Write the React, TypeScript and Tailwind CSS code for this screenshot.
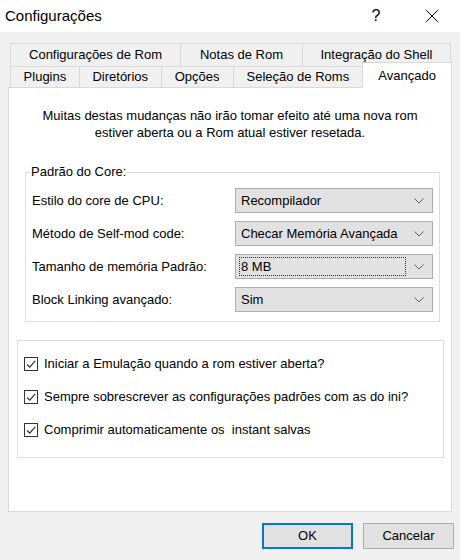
import React from "react";

const font = { fontFamily: '"Liberation Sans", Arial, sans-serif' };

function Tab({ label, w, selected }: { label: string; w: string; selected?: boolean }) {
  return (
    <div
      className={
        selected
          ? `${w} h-[26px] -mt-[4px] -ml-[1px] bg-white border border-b-0 border-[#d9d9d9] flex items-start justify-center pt-[3px] text-[13px] text-black relative z-10`
          : `${w} h-full bg-[#f0f0f0] border border-[#d9d9d9] -ml-[1px] flex items-center justify-center text-[13px] text-black`
      }
    >
      {label}
    </div>
  );
}

function Chevron() {
  return (
    <svg width="10" height="6" viewBox="0 0 10 6" className="shrink-0">
      <path d="M0.5 0.5 L5 5 L9.5 0.5" fill="none" stroke="#606060" strokeWidth="1" />
    </svg>
  );
}

function Select({ value, focused }: { value: string; focused?: boolean }) {
  return (
    <div className="w-[198px] h-[25px] bg-[#e1e1e1] border border-[#adadad] flex items-center pl-[3px] pr-[8px]">
      <div
        className={
          focused
            ? "flex-1 h-[19px] border border-dotted border-[#333] flex items-center pl-[1px] text-[13px] text-black mr-[8px]"
            : "flex-1 flex items-center pl-[2px] text-[13px] text-black"
        }
      >
        {value}
      </div>
      <Chevron />
    </div>
  );
}

function Row({ label, value, focused }: { label: string; value: string; focused?: boolean }) {
  return (
    <div className="flex items-center h-[25px]">
      <div className="w-[209px] pl-[6px] text-[13px] text-black">{label}</div>
      <Select value={value} focused={focused} />
    </div>
  );
}

function Check({ label }: { label: string }) {
  return (
    <div className="flex items-center gap-[6px] h-[14px]">
      <div className="w-[14px] h-[14px] border border-[#333] bg-white flex items-center justify-center">
        <svg width="12" height="12" viewBox="0 0 12 12">
          <path d="M2 6.5 L4.8 9.2 L10.2 2.8" fill="none" stroke="#333" strokeWidth="1.2" />
        </svg>
      </div>
      <span className="text-[13px] text-black whitespace-pre">{label}</span>
    </div>
  );
}

export default function App() {
  return (
    <div className="w-[460px] h-[560px] bg-[#f0f0f0] flex flex-col overflow-hidden" style={font}>
      {/* Title bar */}
      <div className="h-[32px] bg-white flex items-center shrink-0">
        <span className="pl-[5px] text-[15px] text-black flex-1">Configurações</span>
        <span className="w-[30px] text-center text-[16px] text-black mr-[34px]">?</span>
        <svg width="14" height="14" viewBox="0 0 14 14" className="mr-[21px]">
          <path d="M1 1 L13 13 M13 1 L1 13" stroke="#111" strokeWidth="1" />
        </svg>
      </div>

      {/* Body */}
      <div className="flex flex-col pt-[11px] px-[8px]">
        {/* Tabs */}
        <div className="flex h-[24px] pl-[3px]">
          <Tab label="Configurações de Rom" w="w-[171px]" />
          <Tab label="Notas de Rom" w="w-[123px]" />
          <Tab label="Integração do Shell" w="w-[149px]" />
        </div>
        <div className="flex h-[22px] pl-[3px] -mt-[1px] items-start">
          <Tab label="Plugins" w="w-[70px]" />
          <Tab label="Diretórios" w="w-[83px]" />
          <Tab label="Opções" w="w-[73px]" />
          <Tab label="Seleção de Roms" w="w-[131px]" />
          <Tab label="Avançado" w="w-[90px]" selected />
        </div>

        {/* Panel */}
        <div className="h-[425px] -mt-[1px] bg-white border border-[#d9d9d9] flex flex-col px-[8px]">
          <p className="mt-[19px] text-center text-[13px] leading-[17px] text-black">
            Muitas destas mudanças não irão tomar efeito até uma nova rom
            <br />
            estiver aberta ou a Rom atual estiver resetada.
          </p>

          <div className="mt-[31px] ml-[8px] w-[415px] h-[150px] border border-[#dcdcdc] relative flex flex-col gap-[8px] pt-[15px]">
            <span className="absolute -top-[9px] left-[4px] bg-white px-[1px] text-[13px] leading-[16px] text-black">
              Padrão do Core:
            </span>
            <Row label="Estilo do core de CPU:" value="Recompilador" />
            <Row label="Método de Self-mod code:" value="Checar Memória Avançada" />
            <Row label="Tamanho de memória Padrão:" value="8 MB" focused />
            <Row label="Block Linking avançado:" value="Sim" />
          </div>

          <div className="mt-[18px] w-[427px] h-[118px] border border-[#dcdcdc] flex flex-col gap-[19px] pt-[16px] pl-[6px]">
            <Check label="Iniciar a Emulação quando a rom estiver aberta?" />
            <Check label="Sempre sobrescrever as configurações padrões com as do ini?" />
            <Check label="Comprimir automaticamente os  instant salvas" />
          </div>
        </div>

        {/* Buttons */}
        <div className="flex justify-end gap-[10px] mt-[11px] mr-[-2px]">
          <button className="w-[91px] h-[26px] bg-[#e1e1e1] border-2 border-[#0078d7] text-[13px] text-black">
            OK
          </button>
          <button className="w-[91px] h-[26px] bg-[#e1e1e1] border border-[#adadad] text-[13px] text-black">
            Cancelar
          </button>
        </div>
      </div>
    </div>
  );
}
